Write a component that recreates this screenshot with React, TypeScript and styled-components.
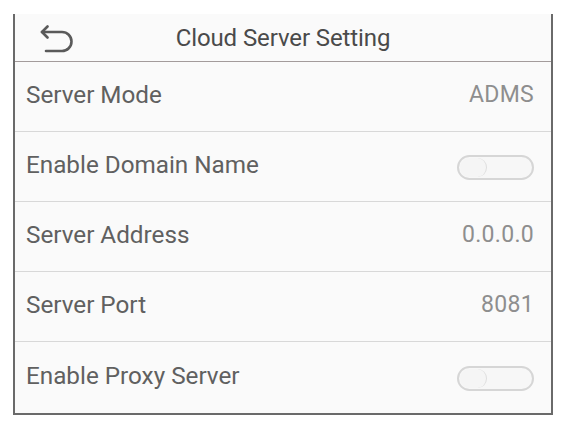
import React from "react";
import styled, { createGlobalStyle } from "styled-components";

const Global = createGlobalStyle`
  html, body { margin: 0; padding: 0; background: #ffffff; }
  body { font-family: Roboto, "Noto Sans", "Liberation Sans", sans-serif; }
`;

const Page = styled.div`
  width: 564px;
  height: 423px;
  padding: 14px 0 0 13px;
  box-sizing: border-box;
  background: #ffffff;
`;

const Panel = styled.div`
  width: 540px;
  box-sizing: border-box;
  background: #fafafa;
  border-left: 2px solid #6a6a6a;
  border-right: 2px solid #6a6a6a;
  border-bottom: 2px solid #6a6a6a;
  display: flex;
  flex-direction: column;
`;

const Header = styled.div`
  height: 47px;
  border-bottom: 1px solid #a39b9b;
  display: grid;
  grid-template-columns: 80px 1fr 80px;
  align-items: center;
`;

const BackButton = styled.div`
  display: flex;
  align-items: center;
  padding-left: 24px;
  margin-top: 2px;
`;

const Title = styled.div`
  text-align: center;
  font-size: 24px;
  color: #4a4a4a;
  letter-spacing: -0.1px;
`;

const Row = styled.div<{ $last?: boolean }>`
  height: ${(p) => (p.$last ? 71 : 69)}px;
  border-bottom: ${(p) => (p.$last ? "none" : "1px solid #d8d8d8")};
  display: flex;
  align-items: center;
  justify-content: space-between;
  padding: 0 17px 0 11px;
`;

const Label = styled.span`
  font-size: 24.25px;
  color: #606060;
  letter-spacing: 0;
  margin-top: -4px;
`;

const Value = styled.span`
  font-size: 23px;
  color: #8e8e8e;
  letter-spacing: 0.3px;
  margin-top: -4px;
`;

const Toggle = styled.div`
  position: relative;
  width: 77px;
  height: 25px;
  border: 2px solid #d6d6d6;
  border-radius: 14px;
  background: #f7f7f7;
  box-sizing: border-box;
  margin-top: 1px;
`;

const Knob = styled.div`
  position: absolute;
  left: 1px;
  top: 1px;
  width: 26px;
  height: 19px;
  border-radius: 10px;
  border-right: 1.5px solid #dddddd;
  background: #f5f5f5;
`;

const BackIcon = () => (
  <svg width="36" height="28" viewBox="0 0 36 28" fill="none">
    <path
      d="M3 7 H23 A9.5 9.5 0 0 1 23 26 H7"
      stroke="#5a5a5a"
      strokeWidth="2.6"
      strokeLinecap="round"
      strokeLinejoin="round"
    />
    <path
      d="M8.5 1.5 L3 7 L8.5 12.5"
      stroke="#5a5a5a"
      strokeWidth="2.6"
      strokeLinecap="round"
      strokeLinejoin="round"
    />
  </svg>
);

type Item = { label: string; value?: string; toggle?: boolean };

const items: Item[] = [
  { label: "Server Mode", value: "ADMS" },
  { label: "Enable Domain Name", toggle: true },
  { label: "Server Address", value: "0.0.0.0" },
  { label: "Server Port", value: "8081" },
  { label: "Enable Proxy Server", toggle: true },
];

export default function App() {
  return (
    <>
      <Global />
      <Page>
        <Panel>
          <Header>
            <BackButton>
              <BackIcon />
            </BackButton>
            <Title>Cloud Server Setting</Title>
            <div />
          </Header>
          {items.map((it, i) => (
            <Row key={it.label} $last={i === items.length - 1}>
              <Label>{it.label}</Label>
              {it.toggle ? (
                <Toggle>
                  <Knob />
                </Toggle>
              ) : (
                <Value>{it.value}</Value>
              )}
            </Row>
          ))}
        </Panel>
      </Page>
    </>
  );
}
